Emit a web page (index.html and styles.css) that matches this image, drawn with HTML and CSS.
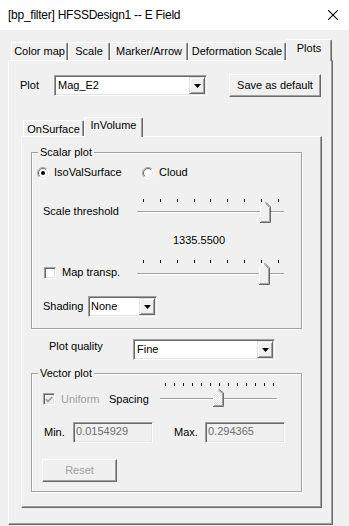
FILE: index.html
```html
<!DOCTYPE html>
<html lang="en">
<head>
  <meta charset="UTF-8" />
  <title>[bp_filter] HFSSDesign1 -- E Field</title>
  <link rel="stylesheet" href="styles.css">
</head>
<body>
  <div class="window">
    <div class="titlebar">
      <span class="title">[bp_filter] HFSSDesign1 -- E Field</span>
      <svg class="close" width="10" height="10" viewBox="0 0 10 10"><path d="M0 0L10 10M10 0L0 10" stroke="#000" stroke-width="1.1"/></svg>
    </div>

    <div class="tabs">
      <div class="tab tab-color">Color map</div>
      <div class="tab tab-scale">Scale</div>
      <div class="tab tab-marker">Marker/Arrow</div>
      <div class="tab tab-deform">Deformation Scale</div>
      <div class="tab tab-plots is-active">Plots</div>
    </div>

    <div class="panel">
      <div class="plot-row">
        <span class="plot-label">Plot</span>
        <div class="combo combo-plot">
          <span class="combo-text">Mag_E2</span>
          <span class="combo-btn"><svg width="7" height="4" viewBox="0 0 7 4"><polygon points="0,0 7,0 3.5,4" fill="#000"/></svg></span>
        </div>
        <button class="btn btn-default">Save as default</button>
      </div>

      <div class="subtabs">
        <div class="subtab subtab-surface">OnSurface</div>
        <div class="subtab subtab-volume is-active">InVolume</div>
      </div>

      <div class="subpanel">
        <fieldset class="group group-scalar">
          <legend>Scalar plot</legend>

          <div class="radio-row">
            <label class="radio radio-iso">
              <svg width="12" height="12" viewBox="0 0 12 12">
                <circle cx="6" cy="6" r="5.5" fill="#fff"/>
                <path d="M2.1 9.9A5.5 5.5 0 0 1 9.9 2.1" fill="none" stroke="#a0a0a0"/>
                <path d="M9.9 2.1A5.5 5.5 0 0 1 2.1 9.9" fill="none" stroke="#fff"/>
                <path d="M2.8 9.2A4.5 4.5 0 0 1 9.2 2.8" fill="none" stroke="#696969"/>
                <path d="M9.2 2.8A4.5 4.5 0 0 1 2.8 9.2" fill="none" stroke="#e3e3e3"/>
                <circle cx="6" cy="6" r="2" fill="#000"/>
              </svg>
              <span>IsoValSurface</span>
            </label>
            <label class="radio">
              <svg width="12" height="12" viewBox="0 0 12 12">
                <circle cx="6" cy="6" r="5.5" fill="#fff"/>
                <path d="M2.1 9.9A5.5 5.5 0 0 1 9.9 2.1" fill="none" stroke="#a0a0a0"/>
                <path d="M9.9 2.1A5.5 5.5 0 0 1 2.1 9.9" fill="none" stroke="#fff"/>
                <path d="M2.8 9.2A4.5 4.5 0 0 1 9.2 2.8" fill="none" stroke="#696969"/>
                <path d="M9.2 2.8A4.5 4.5 0 0 1 2.8 9.2" fill="none" stroke="#e3e3e3"/>
              </svg>
              <span>Cloud</span>
            </label>
          </div>

          <div class="slider-row">
            <span class="slider-label">Scale threshold</span>
            <svg class="slider" width="148" height="25" viewBox="0 0 148 25">
              <path d="M6.5 0v3M23.5 0v3M40.5 0v3M57.5 0v3M73.5 0v3M90.5 0v3M107.5 0v3M124.5 0v3M141.5 0v3" stroke="#000"/>
              <path d="M0 12.5H147" stroke="#a0a0a0"/>
              <path d="M0 13.5H147" stroke="#fff"/>
              <polygon points="123,8 128.5,2.5 134,8 134,24 123,24" fill="#f0f0f0"/>
              <polyline points="123.5,23.5 123.5,8 128.5,3" fill="none" stroke="#fff"/>
              <polyline points="128.5,3 133.5,8 133.5,23.5 123,23.5" fill="none" stroke="#696969"/>
              <polyline points="128.5,4.5 132.5,8.5 132.5,22.5 124,22.5" fill="none" stroke="#a0a0a0"/>
            </svg>
          </div>

          <div class="value-row">1335.5500</div>

          <div class="check-row">
            <label class="check-label">
              <span class="checkbox"></span>
              <span>Map transp.</span>
            </label>
            <svg class="slider" width="148" height="25" viewBox="0 0 148 25">
              <path d="M6.5 0v3M23.5 0v3M40.5 0v3M57.5 0v3M73.5 0v3M90.5 0v3M107.5 0v3M124.5 0v3M141.5 0v3" stroke="#000"/>
              <path d="M0 13.5H147" stroke="#a0a0a0"/>
              <path d="M0 14.5H147" stroke="#fff"/>
              <polygon points="122,8 127.5,2.5 133,8 133,25 122,25" fill="#f0f0f0"/>
              <polyline points="122.5,24.5 122.5,8 127.5,3" fill="none" stroke="#fff"/>
              <polyline points="127.5,3 132.5,8 132.5,24.5 122,24.5" fill="none" stroke="#696969"/>
              <polyline points="127.5,4.5 131.5,8.5 131.5,23.5 123,23.5" fill="none" stroke="#a0a0a0"/>
            </svg>
          </div>

          <div class="shading-row">
            <span class="shading-label">Shading</span>
            <div class="combo combo-shading">
              <span class="combo-text">None</span>
              <span class="combo-btn"><svg width="7" height="4" viewBox="0 0 7 4"><polygon points="0,0 7,0 3.5,4" fill="#000"/></svg></span>
            </div>
          </div>
        </fieldset>

        <div class="quality-row">
          <span class="quality-label">Plot quality</span>
          <div class="combo combo-quality">
            <span class="combo-text">Fine</span>
            <span class="combo-btn"><svg width="7" height="4" viewBox="0 0 7 4"><polygon points="0,0 7,0 3.5,4" fill="#000"/></svg></span>
          </div>
        </div>

        <fieldset class="group group-vector">
          <legend>Vector plot</legend>

          <div class="uniform-row">
            <span class="checkbox is-disabled">
              <svg width="8" height="7" viewBox="0 0 8 7"><polyline points="0.8,3.2 3,5.4 7.2,1.2" fill="none" stroke="#a0a0a0" stroke-width="1.8"/></svg>
            </span>
            <span class="uniform-label">Uniform</span>
            <span class="spacing-label">Spacing</span>
            <svg class="slider" width="118" height="32" viewBox="0 0 118 32">
              <defs>
                <pattern id="hatch" width="2" height="2" patternUnits="userSpaceOnUse">
                  <rect width="2" height="2" fill="#fff"/>
                  <rect width="1" height="1" fill="#e3e3e3"/>
                  <rect x="1" y="1" width="1" height="1" fill="#e3e3e3"/>
                </pattern>
              </defs>
              <path d="M5.5 0v3M14.5 0v3M23.5 0v3M32.5 0v3M41.5 0v3M50.5 0v3M59.5 0v3M68.5 0v3M77.5 0v3M86.5 0v3M95.5 0v3M104.5 0v3M113.5 0v3" stroke="#000"/>
              <path d="M0 15.5H117" stroke="#a0a0a0"/>
              <path d="M0 16.5H117" stroke="#fff"/>
              <polygon points="53,10 58.5,5.5 64,10 64,24 53,24" fill="url(#hatch)"/>
              <polyline points="53.5,23.5 53.5,10 58.5,6" fill="none" stroke="#fff"/>
              <polyline points="58.5,6 63.5,10 63.5,23.5 53,23.5" fill="none" stroke="#696969"/>
              <polyline points="58.5,7.5 62.5,10.5 62.5,22.5 54,22.5" fill="none" stroke="#a0a0a0"/>
            </svg>
          </div>

          <div class="minmax-row">
            <span class="min-label">Min.</span>
            <div class="edit">0.0154929</div>
            <span class="max-label">Max.</span>
            <div class="edit">0.294365</div>
          </div>

          <div class="reset-row">
            <button class="btn btn-reset" disabled>Reset</button>
          </div>
        </fieldset>
      </div>
    </div>
  </div>
</body>
</html>
```

FILE: styles.css
```css
body {
  margin: 0;
  background: #f0f0f0;
  font-family: "Liberation Sans", Arial, sans-serif;
  font-size: 11px;
  line-height: 13px;
  color: #000;
}

.window {
  width: 349px;
  height: 526px;
  overflow: hidden;
}

/* title bar */
.titlebar {
  box-sizing: border-box;
  height: 30px;
  padding: 0 11px 0 8px;
  background: #fff;
  display: flex;
  align-items: center;
  justify-content: space-between;
  font-size: 12px;
  letter-spacing: -0.25px;
}

/* top tab strip */
.tabs {
  display: flex;
  align-items: flex-end;
  height: 21px;
  margin-top: 9px;
  padding-left: 11px;
}

.tab,
.subtab {
  box-sizing: border-box;
  height: 18px;
  padding-top: 2px;
  text-align: center;
  white-space: nowrap;
  border-top: 1px solid #fff;
  border-left: 1px solid #fff;
  border-right: 1px solid #696969;
  box-shadow: inset -1px 0 #a0a0a0;
  border-top-left-radius: 2px;
  border-top-right-radius: 2px;
}

.tab.is-active,
.subtab.is-active {
  position: relative;
  z-index: 1;
  height: 22px;
  margin-bottom: -1px;
  padding-top: 2px;
  background: #f0f0f0;
}

.tab-color { width: 57px; }
.tab-scale { width: 42px; }
.tab-marker { width: 78px; }
.tab-deform { width: 98px; }
.tab-plots { width: 46px; }

.panel,
.subpanel {
  box-sizing: border-box;
  border: 1px solid;
  border-color: #fff #696969 #696969 #fff;
  box-shadow: inset -1px -1px #a0a0a0;
}

.panel {
  width: 325px;
  height: 465px;
  margin-left: 8px;
  padding-top: 13px;
}

.plot-row {
  display: flex;
  align-items: center;
  padding-left: 11px;
}

.plot-label { width: 34px; }

/* combo boxes */
.combo {
  box-sizing: border-box;
  height: 21px;
  padding: 1px 1px 1px 3px;
  display: flex;
  align-items: center;
  justify-content: space-between;
  background: #fff;
  border: 1px solid;
  border-color: #a0a0a0 #fff #fff #a0a0a0;
  box-shadow: inset 1px 1px #696969, inset -1px -1px #e3e3e3;
}

.combo-btn {
  box-sizing: border-box;
  width: 16px;
  height: 17px;
  display: flex;
  align-items: center;
  justify-content: center;
  background: #f0f0f0;
  border: 1px solid;
  border-color: #e3e3e3 #696969 #696969 #e3e3e3;
  box-shadow: inset 1px 1px #fff, inset -1px -1px #a0a0a0;
}

.combo-plot { width: 153px; }
.combo-shading { width: 69px; padding-left: 2px; }
.combo-quality { width: 142px; }

/* push buttons */
.btn {
  box-sizing: border-box;
  height: 23px;
  padding: 0;
  font: inherit;
  color: #000;
  background: #f0f0f0;
  border: 1px solid;
  border-color: #fff #696969 #696969 #fff;
  box-shadow: inset -1px -1px #a0a0a0;
}

.btn-default {
  width: 92px;
  margin-left: 22px;
}

.btn-reset {
  width: 75px;
  color: #a0a0a0;
}

/* inner tab strip */
.subtabs {
  display: flex;
  align-items: flex-end;
  height: 19px;
  margin: 20px 0 0 14px;
}

.subtab {
  height: 16px;
  padding-top: 1px;
}

.subtab.is-active {
  height: 20px;
  padding-top: 1px;
}

.subtab-surface { width: 61px; padding-top: 2px; }
.subtab-volume { width: 59px; }

.subpanel {
  height: 372px;
  margin: 0 10px 0 12px;
  padding: 9px 0 0 9px;
}

/* group boxes */
.group {
  box-sizing: border-box;
  width: 271px;
  min-inline-size: 0;
  margin: 0;
  padding: 0 0 11px;
  border: 1px solid #a0a0a0;
  box-shadow: inset 1px 1px #fff, 1px 1px #fff;
}

.group legend {
  margin-left: 6px;
  padding: 0 2px;
  line-height: 13px;
  background: #f0f0f0;
}

.group-vector {
  margin-top: 7px;
  padding-bottom: 9px;
}

.radio-row {
  display: flex;
  align-items: center;
  margin-top: 7px;
  padding-left: 5px;
}

.radio {
  display: flex;
  align-items: center;
  gap: 5px;
}

.radio-iso { width: 105px; }

.slider { display: block; }

.slider-row {
  display: flex;
  align-items: center;
  margin-top: 20px;
  padding-left: 11px;
}

.slider-label { width: 94px; }

.value-row {
  margin-top: 10px;
  padding-left: 141px;
}

.check-row {
  display: flex;
  align-items: center;
  margin-top: 13px;
  padding-left: 12px;
}

.check-label {
  width: 93px;
  display: flex;
  align-items: center;
  gap: 6px;
}

.checkbox {
  box-sizing: border-box;
  width: 12px;
  height: 12px;
  display: flex;
  align-items: center;
  justify-content: center;
  background: #fff;
  border: 1px solid;
  border-color: #a0a0a0 #fff #fff #a0a0a0;
  box-shadow: inset 1px 1px #696969, inset -1px -1px #e3e3e3;
}

.checkbox.is-disabled { background: #f0f0f0; }

.shading-row {
  display: flex;
  align-items: center;
  margin-top: 11px;
  padding-left: 11px;
}

.shading-label { width: 45px; }

.quality-row {
  display: flex;
  margin-top: 10px;
  padding-left: 18px;
}

.quality-label {
  width: 84px;
  margin-top: 1px;
}

.uniform-row {
  display: flex;
  align-items: center;
  margin-top: 3px;
  padding-left: 11px;
}

.uniform-label {
  width: 48px;
  margin-left: 6px;
  color: #a0a0a0;
}

.spacing-label { width: 51px; }

.minmax-row {
  display: flex;
  align-items: center;
  margin-top: 7px;
  padding-left: 12px;
}

.min-label { width: 29px; }

.max-label {
  width: 31px;
  margin-left: 21px;
}

.edit {
  box-sizing: border-box;
  width: 80px;
  height: 21px;
  padding: 2px 2px 0;
  color: #6d6d6d;
  background: #f0f0f0;
  border: 1px solid;
  border-color: #a0a0a0 #fff #fff #a0a0a0;
  box-shadow: inset 1px 1px #696969, inset -1px -1px #e3e3e3;
}

.reset-row {
  margin-top: 16px;
  padding-left: 10px;
}
```
